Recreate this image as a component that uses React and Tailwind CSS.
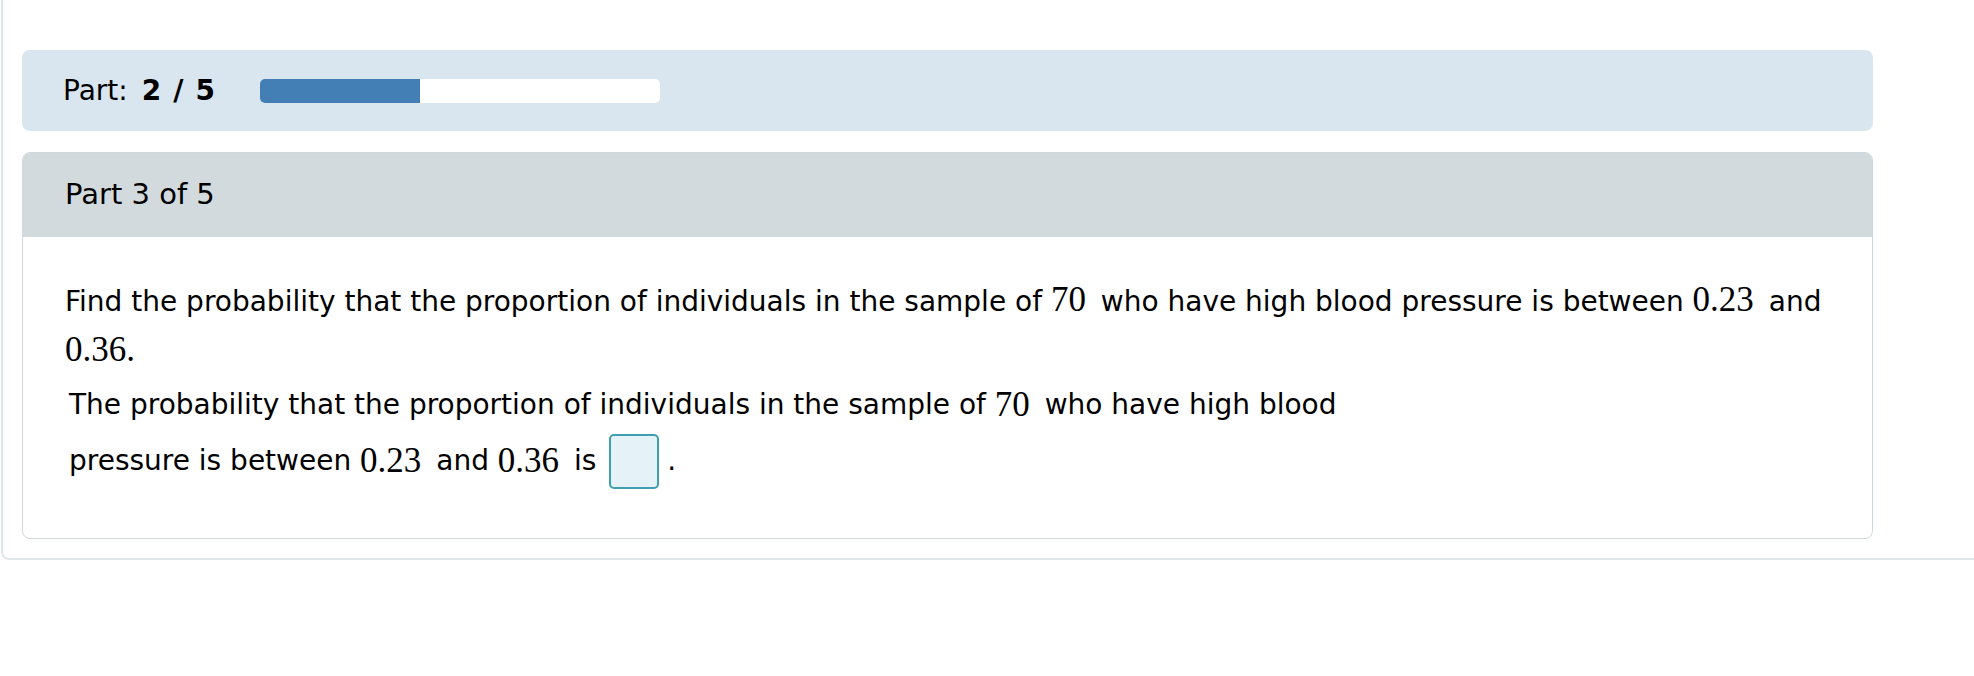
const sans = { fontFamily: '"DejaVu Sans", Verdana, sans-serif' };

// math bits render in a serif face like MathJax output, with a little trailing room
function M({ children, tail = true }) {
  return (
    <span className={`font-['Liberation_Serif',serif] text-[35px] ${tail ? 'pr-[6px]' : ''}`}>
      {children}
    </span>
  );
}

function ProgressHeader() {
  return (
    <div className="flex h-[81px] items-center rounded-lg bg-[#dae6ef] pl-[41px]">
      <div className="flex items-baseline text-[28px] text-black">
        <span>Part:</span>
        <span className="ml-[14px] font-bold">
          2<span className="mx-[12px]">/</span>5
        </span>
      </div>
      <div className="ml-[45px] flex h-6 w-[400px] overflow-hidden rounded-[5px] bg-white">
        <div className="h-full w-[160px] bg-[#437eb4]" />
      </div>
    </div>
  );
}

function QuestionCard() {
  return (
    <div className="mt-[21px] overflow-hidden rounded-lg border border-[#cfd8dc]">
      <div className="flex h-[84px] items-center bg-[#d2dadd] pl-[42px] text-[29px] text-black">
        Part 3 of 5
      </div>
      <div className="pb-[49px] pl-[42px] pt-[39px] text-[28px] text-black">
        <p className="whitespace-nowrap leading-[48px]">
          Find the probability that the proportion of individuals in the sample of <M>70</M> who have
          high blood pressure is between <M>0.23</M> and
          <br />
          <M tail={false}>0.36.</M>
        </p>
        <div className="mt-[1px] pl-[4px]">
          <div className="flex h-[56px] items-center whitespace-nowrap">
            The probability that the proportion of individuals in the sample of&nbsp;<M>70</M>&nbsp;who
            have high blood
          </div>
          <div className="flex h-[56px] items-center whitespace-nowrap">
            pressure is between&nbsp;<M>0.23</M>&nbsp;and&nbsp;<M>0.36</M>&nbsp;is
            <span className="ml-[13px] inline-block h-[55px] w-[50px] rounded-[5px] border-2 border-[#3d9fb0] bg-[#e5f3f8]" />
            <span className="ml-[8px]">.</span>
          </div>
        </div>
      </div>
    </div>
  );
}

export default function App() {
  return (
    <div className="min-h-screen bg-white" style={sans}>
      <div className="ml-[1px] rounded-bl-lg border-b-2 border-l-2 border-[#dfe6ea] pb-[19px] pt-[50px] pl-[19px]">
        <div className="w-[1851px]">
          <ProgressHeader />
          <QuestionCard />
        </div>
      </div>
    </div>
  );
}
